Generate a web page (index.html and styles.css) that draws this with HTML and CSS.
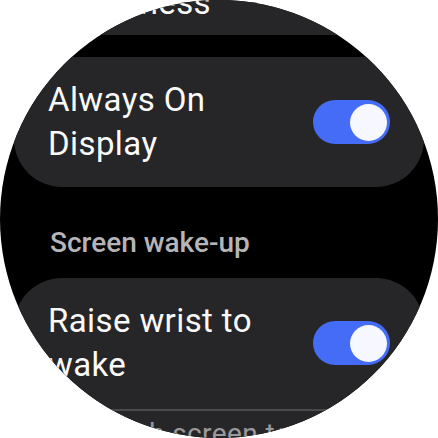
FILE: index.html
```html
<!DOCTYPE html>
<html>
<head>
<meta charset="utf-8">
<link rel="stylesheet" href="styles.css">
</head>
<body>
<div class="watch">
  <div class="list">
    <div class="card card-top">
      <div class="label">Brightness</div>
    </div>
    <div class="card row">
      <div class="label">Always On<br>Display</div>
      <div class="toggle"><div class="thumb"></div></div>
    </div>
    <div class="header">Screen wake-up</div>
    <div class="card group">
      <div class="row">
        <div class="label">Raise wrist to<br>wake</div>
        <div class="toggle"><div class="thumb"></div></div>
      </div>
      <div class="divider"></div>
      <div class="row sub">
        <div class="label dim">Touch screen to wake</div>
      </div>
    </div>
  </div>
</div>
</body>
</html>
```
FILE: styles.css
```css
* { box-sizing: border-box; }
html, body { margin: 0; padding: 0; background: #fff; }
body { width: 438px; height: 438px; overflow: hidden; font-family: Roboto, "Liberation Sans", sans-serif; }
.watch {
  width: 438px;
  height: 438px;
  border-radius: 50%;
  overflow: hidden;
  background: #000;
}
.list {
  display: flex;
  flex-direction: column;
  padding: 0 14px;
  margin-top: -39px;
}
.card {
  background: #262628;
  border-radius: 48px;
}
.card-top {
  padding: 20px 36px 10px 36px;
  margin-bottom: 22px;
}
.label {
  color: #fafafa;
  font-size: 33px;
  line-height: 44px;
  letter-spacing: 0.4px;
}
.row {
  display: flex;
  align-items: center;
  justify-content: space-between;
  padding: 21px 34px 21px 34px;
}
.toggle {
  width: 77px;
  height: 44px;
  border-radius: 22px;
  background: #456cf6;
  display: flex;
  align-items: center;
  justify-content: flex-end;
  padding-right: 3px;
  flex: none;
}
.thumb {
  width: 37px;
  height: 37px;
  border-radius: 50%;
  background: #f7f8ff;
}
.header {
  color: #b5b5b7;
  font-size: 28px;
  font-weight: 500;
  line-height: 32px;
  padding: 40px 36px 19px;
}
.group .row { padding-bottom: 22px; }
.divider {
  height: 2px;
  background: #4a4a4c;
  margin: 0 30px;
}
.group .sub { padding-top: 1px; }
.dim { color: #9a9a9c; font-size: 28px; padding-left: 38px; }
```
